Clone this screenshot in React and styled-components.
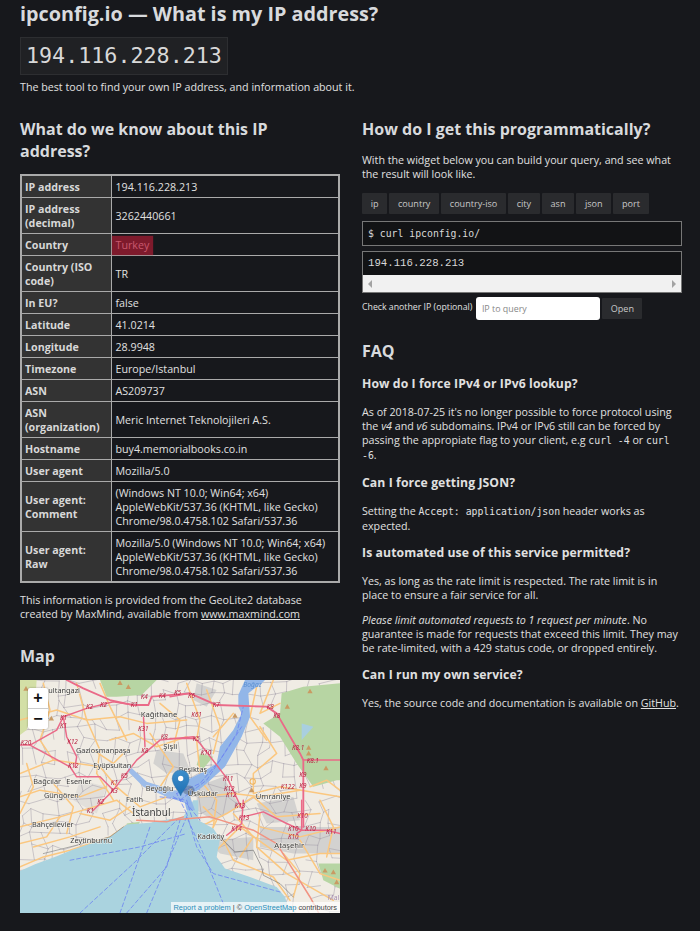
import React from 'react'
import styled, { createGlobalStyle } from 'styled-components'

const GlobalStyle = createGlobalStyle`
  html, body { margin: 0; padding: 0; background: #17181c; }
  body { color: #e0e0e0; font-family: "Open Sans", "Noto Sans", sans-serif; font-size: 10.7px; line-height: 14px; }
`

const rows = [
  ['IP address', '194.116.228.213'],
  ['IP address (decimal)', '3262440661'],
  ['Country', 'Turkey'],
  ['Country (ISO code)', 'TR'],
  ['In EU?', 'false'],
  ['Latitude', '41.0214'],
  ['Longitude', '28.9948'],
  ['Timezone', 'Europe/Istanbul'],
  ['ASN', 'AS209737'],
  ['ASN (organization)', 'Meric Internet Teknolojileri A.S.'],
  ['Hostname', 'buy4.memorialbooks.co.in'],
  ['User agent', 'Mozilla/5.0'],
  ['User agent: Comment', '(Windows NT 10.0; Win64; x64) AppleWebKit/537.36 (KHTML, like Gecko) Chrome/98.0.4758.102 Safari/537.36'],
  ['User agent: Raw', 'Mozilla/5.0 (Windows NT 10.0; Win64; x64) AppleWebKit/537.36 (KHTML, like Gecko) Chrome/98.0.4758.102 Safari/537.36'],
]

const fields = ['ip', 'country', 'country-iso', 'city', 'asn', 'json', 'port']

// map is drawn in a 960x698 space, offset so numbers read like the screenshot x3
const motorways = [
  'M200 120 L250 145 L330 180 L400 195 L445 195 L455 170 L570 160 L650 195 L800 200 L830 220 L900 340 L910 360 L910 560',
  'M60 315 L90 315 L170 270 L190 230 L260 205 L340 185 L400 195',
  'M90 315 L210 380 L230 410 L300 410 L340 450 L410 360 L480 300 L580 290 L600 310 L685 420 L725 505',
  'M190 230 L200 290 L230 350 L225 380',
  'M430 220 L435 320',
  'M340 450 L300 490 L280 510',
  'M910 360 L1020 360',
  'M510 170 L570 160',
  'M510 295 L580 295',
  'M730 530 L790 515 L860 550 L905 570 L980 570 L1020 580',
  'M905 480 L905 570 L890 580',
  'M730 480 L725 550 L680 585',
]
const trunks = [
  'M510 540 L630 530 L760 570 L830 610 L930 770 L960 825',
  'M410 540 L500 545 L550 530',
]
const primaries = [
  'M60 400 L160 360 L300 380 L350 440 L420 500 L500 470',
  'M60 560 L180 530 L350 480 L400 520',
  'M100 620 L210 590 L300 560',
  'M60 680 L130 650 L210 630 L330 590 L380 555',
  'M230 130 L260 240 L300 330 L290 400 L340 480',
  'M560 130 L600 240 L590 300 L600 400',
  'M780 260 L830 340 L760 400 L760 460 L840 440 L1020 470',
  'M600 470 L700 460 L780 470 L900 450',
  'M600 560 L680 520 L760 470 L830 530 L960 520',
  'M640 640 L720 560 L860 660 L960 640 L1020 640',
  'M670 600 L700 660 L820 710 L870 780',
  'M820 120 L780 220 L840 190',
  'M900 600 L960 700 L1020 720',
  'M450 280 L520 380 L480 440',
  'M60 470 L120 450 L240 470 L320 440',
  'M930 440 L980 420 L1020 450',
  'M60 240 L170 210 L260 240 L360 230 L440 250 L560 240',
  'M130 130 L150 210 L120 300 L160 360',
  'M330 300 L400 280 L470 320 L560 290',
  'M620 150 L660 260 L640 340',
  'M60 610 L140 590 L180 530',
  'M240 520 L330 540 L390 500',
  'M780 520 L770 620 L860 700 L1000 780',
  'M620 600 L650 540 L610 500',
  'M960 480 L1000 560 L980 650',
  'M770 140 L750 230 L800 300',
  'M600 420 L650 480 L640 560',
  'M280 330 L340 370 L380 330',
  'M780 560 L900 590 L1020 560',
  'M60 520 L100 440 L80 370',
  'M160 430 L220 500 L200 580',
  'M300 130 L330 200 L380 300',
  'M480 190 L540 240 L520 320',
  'M700 520 L760 590 L720 650',
  'M850 640 L900 700 L880 770',
  'M640 290 L700 220',
]
const ferries = [
  'M210 660 L420 620 L560 580', 'M240 818 L400 670 L530 540', 'M360 818 L450 560', 'M380 818 L500 680 L540 540',
  'M440 818 L560 530', 'M670 790 L610 640 L560 530', 'M840 755 L640 700 L590 620 L560 520', 'M560 520 L530 460',
  'M530 460 L600 430 L660 360 L710 280 L730 200', 'M540 480 L620 420 L680 330 L725 260',
  'M520 470 L560 490 L600 540', 'M480 470 L560 480 L575 530',
]
const places = [
  ['ultangazi', 145, 160, 22], ['Kağıthane', 422, 231, 23], ['Şişli', 490, 328, 23], ['Gaziosmanpaşa', 228, 340, 22],
  ['Eyüpsultan', 280, 384, 22], ['Beşiktaş', 536, 396, 22], ['Bağcılar', 100, 432, 22], ['Esenler', 199, 432, 22],
  ['Güngören', 132, 473, 22], ['Beyoğlu', 437, 454, 22], ['Üsküdar', 563, 467, 23], ['Ümraniye', 767, 478, 23],
  ['Fatih', 378, 486, 22], ['İstanbul', 396, 528, 30], ['Bahçelievler', 96, 561, 22], ['Kadıköy', 592, 595, 22],
  ['Zeytinburnu', 211, 608, 22], ['Ataşehir', 823, 622, 23],
]
const shields = [
  ['K4', 422, 178], ['K4', 476, 174], ['K5', 522, 166], ['K6', 564, 174], ['K7', 638, 202], ['K8', 800, 206], ['K8', 820, 234],
  ['K1', 392, 202], ['K2', 258, 208], ['K2', 300, 200], ['K1', 180, 240], ['K1', 180, 264], ['K61', 574, 232], ['K31', 414, 274],
  ['K8', 482, 298], ['K5', 578, 304], ['K12', 202, 312], ['K20', 62, 314], ['K8', 424, 340], ['K10', 602, 344], ['K12', 204, 384],
  ['K5', 362, 414], ['K1', 332, 436], ['K3', 332, 458], ['K2', 292, 492], ['K1', 260, 518], ['K11', 668, 424], ['K12', 672, 452],
  ['K12', 678, 472], ['K13', 704, 504], ['K13', 716, 538], ['K14', 694, 572], ['K122', 842, 448], ['K8.1', 876, 330], ['K8.1', 920, 368],
  ['K9', 898, 412], ['K9', 898, 444], ['K10', 892, 534], ['K10', 864, 572], ['K10', 864, 596], ['K10', 916, 572], ['K11', 978, 580],
]
const peaks = [
  [78, 145], [360, 128], [385, 140], [154, 234], [930, 153], [862, 199], [705, 226], [926, 322], [926, 339], [978, 383], [755, 449], [975, 690], [1000, 695], [1010, 725],
]

// thin street mesh, same every render
const noise = (n) => {
  const v = Math.sin(n * 127.1) * 43758.5453
  return v - Math.floor(v)
}
const CELL = 36
const point = (c, r) => [
  60 + c * CELL + (noise(c * 31 + r * 7) - 0.5) * 26,
  120 + r * CELL + (noise(c * 13 + r * 41) - 0.5) * 26,
]
const streets = []
for (let c = 0; c < 28; c++) {
  for (let r = 0; r < 20; r++) {
    const [x, y] = point(c, r)
    if (noise(c * 3 + r * 17) > 0.3) {
      const [x2, y2] = point(c + 1, r)
      streets.push(`M${x} ${y} L${x2} ${y2}`)
    }
    if (noise(c * 19 + r * 5) > 0.3) {
      const [x2, y2] = point(c, r + 1)
      streets.push(`M${x} ${y} L${x2} ${y2}`)
    }
  }
}

const MapDrawing = () => (
  <MapSvg viewBox="60 120 960 698" preserveAspectRatio="none">
    <defs>
      <linearGradient id="pin" x1="0" y1="0" x2="0" y2="1">
        <stop offset="0" stopColor="#3d8ecb" />
        <stop offset="1" stopColor="#1f6fb3" />
      </linearGradient>
    </defs>
    <rect x="60" y="120" width="960" height="698" fill="#f0ece4" />
    <g fill="#d3d2d0">
      <path d="M470 330 L550 340 L570 390 L500 400 L460 370 Z" />
      <path d="M590 130 L650 150 L620 200 L580 180 Z" />
      <path d="M590 440 L670 410 L720 500 L640 540 L590 510 Z" />
      <path d="M770 490 L880 470 L900 540 L800 550 Z" />
      <path d="M780 560 L1020 560 V640 L880 640 L780 620 Z" />
      <path d="M620 600 L760 590 L760 660 L660 640 Z" />
      <path d="M240 420 L320 440 L290 520 L220 480 Z" opacity="0.5" />
    </g>
    <g fill="none" strokeLinecap="round" strokeLinejoin="round">
      {streets.map((d, i) => <path key={i} d={d} stroke="#a39ca8" strokeWidth="2.2" opacity="0.7" />)}
    </g>
    <g fill="#b7d5a3">
      <path d="M60 120 H110 L105 190 L80 270 L60 285 Z" fill="#d3dfa6" />
      <path d="M300 120 H470 L425 165 L350 170 L320 170 Z" />
      <path d="M845 160 L910 140 L1020 130 V420 L1010 420 L940 440 L890 370 L840 290 L790 250 L840 220 Z" />
      <path d="M600 340 L640 350 L610 385 L590 375 Z" />
      <path d="M955 670 H1020 V745 L970 720 Z" />
      <path d="M380 550 L420 545 L410 565 L385 565 Z" />
    </g>
    <path d="M905 250 L940 260 L905 300 Z" fill="#a9cfe0" />
    <g fill="none" strokeLinecap="round" strokeLinejoin="round">
      {primaries.map((d, i) => <path key={i} d={d} stroke="#fbc77f" strokeWidth="4.5" />)}
    </g>
    <path
      d="M60 692 L105 672 L170 648 L220 628 L330 590 L380 553 L450 548 L550 530 L580 480 L595 480 L595 540 L640 565 L660 595 L650 650 L675 685 L750 710 L830 740 L855 770 L870 818 H60 Z"
      fill="#aad3df"
    />
    <path
      d="M735 120 L715 165 L715 200 L725 220 L700 270 L660 320 L650 370 L600 400 L540 430 L560 510 L585 510 L570 470 L620 430 L675 380 L725 290 L750 230 L745 160 L790 125 L795 120 Z"
      fill="#92b6e8"
    />
    <path d="M385 375 L440 425 L520 450 L560 455 L560 490 L500 470 L430 440 L385 395 Z" fill="#9dbce9" />
    <g fill="none" strokeLinecap="round" strokeLinejoin="round">
      {ferries.map((d, i) => <path key={i} d={d} stroke="#6f86f0" strokeWidth="2.5" strokeDasharray="12 8" />)}
      {trunks.map((d, i) => <path key={i} d={d} stroke="#f19382" strokeWidth="4.5" />)}
      {motorways.map((d, i) => <path key={i} d={d} stroke="#ea6a88" strokeWidth={i === 0 ? 5.5 : 4.5} />)}
      <path d="M670 600 L705 635 L760 630 L785 680 L790 705 L840 730 L880 770" stroke="#777" strokeWidth="2" />
      <path d="M130 640 L210 620 L330 590 L370 560" stroke="#888" strokeWidth="2" />
      <circle cx="758" cy="424" r="8" stroke="#f0b35a" strokeWidth="3" />
    </g>
    {peaks.map(([x, y], i) => <path key={i} d={`M${x - 8} ${y + 7} L${x} ${y - 7} L${x + 8} ${y + 7} Z`} fill="#c99a63" />)}
    <g fontFamily="'Noto Sans', sans-serif" fill="#3c3c3c" stroke="#f4f2ec" strokeWidth="3" paintOrder="stroke">
      {places.map(([t, x, y, s]) => <text key={t} x={x} y={y} fontSize={s}>{t}</text>)}
    </g>
    <g fontFamily="'Noto Sans', sans-serif" fontStyle="italic" fill="#b5203f" fontSize="19">
      {shields.map(([t, x, y], i) => <text key={i} x={x} y={y}>{t}</text>)}
    </g>
    <text x="730" y="140" fontFamily="'Noto Sans', sans-serif" fontStyle="italic" fontSize="20" fill="#5a8fd0">Boğaz</text>
    <text x="983" y="778" fontFamily="'Noto Sans', sans-serif" fontSize="20" fill="#a58cb0">Mal</text>
    <ellipse cx="566" cy="450" rx="18" ry="14" fill="#000" opacity="0.22" />
    <path d="M542 467 C536 450 517 436 517 415 C517 400 528 390 542 390 C556 390 567 400 567 415 C567 436 548 450 542 467 Z" fill="url(#pin)" stroke="#2a6ea6" strokeWidth="1.5" />
    <circle cx="542" cy="415" r="8" fill="#fff" />
  </MapSvg>
)

const App = () => (
  <>
    <GlobalStyle />
    <Page>
      <Title>ipconfig.io — What is my IP address?</Title>
      <IpBox>194.116.228.213</IpBox>
      <Lead>The best tool to find your own IP address, and information about it.</Lead>
      <Columns>
        <section>
          <Heading>What do we know about this IP address?</Heading>
          <InfoTable>
            <tbody>
              {rows.map(([key, value]) => (
                <tr key={key}>
                  <th>{key}</th>
                  <td>{key === 'Country' ? <Flagged>{value}</Flagged> : value}</td>
                </tr>
              ))}
            </tbody>
          </InfoTable>
          <Note>
            This information is provided from the GeoLite2 database created by MaxMind, available from{' '}
            <a href="#maxmind">www.maxmind.com</a>
          </Note>
          <MapHeading>Map</MapHeading>
          <MapFrame>
            <MapDrawing />
            <ZoomControl>
              <ZoomButton>+</ZoomButton>
              <ZoomButton>−</ZoomButton>
            </ZoomControl>
            <Attribution>
              <a href="#report">Report a problem</a> | © <a href="#osm">OpenStreetMap</a> contributors
            </Attribution>
          </MapFrame>
        </section>
        <section>
          <Heading>How do I get this programmatically?</Heading>
          <WidgetIntro>With the widget below you can build your query, and see what the result will look like.</WidgetIntro>
          <FieldRow>
            {fields.map((f) => <FieldButton key={f}>{f}</FieldButton>)}
          </FieldRow>
          <CurlBox>$ curl ipconfig.io/</CurlBox>
          <ResultBox>
            <ResultText>194.116.228.213</ResultText>
            <ScrollTrack>
              <Arrow $dir="left" />
              <Arrow $dir="right" />
            </ScrollTrack>
          </ResultBox>
          <QueryRow>
            <QueryLabel>Check another IP (optional)</QueryLabel>
            <QueryInput placeholder="IP to query" />
            <OpenButton>Open</OpenButton>
          </QueryRow>
          <FaqHeading>FAQ</FaqHeading>
          <Question>How do I force IPv4 or IPv6 lookup?</Question>
          <Answer>
            As of 2018-07-25 it's no longer possible to force protocol using the <em>v4</em> and <em>v6</em> subdomains.
            IPv4 or IPv6 still can be forced by passing the appropiate flag to your client, e.g <code>curl&nbsp;-4</code> or <code>curl -6</code>.
          </Answer>
          <Question>Can I force getting JSON?</Question>
          <Answer>Setting the <code>Accept: application/json</code> header works as expected.</Answer>
          <Question>Is automated use of this service permitted?</Question>
          <Answer>Yes, as long as the rate limit is respected. The rate limit is in place to ensure a fair service for all.</Answer>
          <Answer><em>Please limit automated requests to 1 request per minute</em>. No guarantee is made for requests that exceed this limit. They may be rate-limited, with a 429 status code, or dropped entirely.</Answer>
          <Question>Can I run my own service?</Question>
          <Answer>Yes, the source code and documentation is available on <a href="#github">GitHub</a>.</Answer>
        </section>
      </Columns>
    </Page>
  </>
)

export default App

const Page = styled.div`
  width: 662px;
  height: 931px;
  padding: 0 18px 0 20px;
  overflow: hidden;
  a { color: inherit; }
`

const Title = styled.h1`
  margin: 0;
  font-size: 19.8px;
  line-height: 27px;
  font-weight: 700;
  color: #d8dadd;
  white-space: nowrap;
`

const IpBox = styled.div`
  display: inline-block;
  margin-top: 10px;
  padding: 0 5px;
  height: 36px;
  line-height: 36px;
  font-family: "DejaVu Sans Mono", monospace;
  font-size: 21.7px;
  color: #d8d8d8;
  background: #202124;
  border: 1px solid #2d2e31;
`

const Lead = styled.p`
  margin: 5px 0 0;
`

const Columns = styled.div`
  display: grid;
  grid-template-columns: 320px 320px;
  column-gap: 22px;
  margin-top: 24px;
`

const Heading = styled.h2`
  margin: 0;
  font-size: 16px;
  line-height: 22px;
  font-weight: 700;
  color: #d8dadd;
`

const InfoTable = styled.table`
  width: 320px;
  margin-top: 12px;
  border-collapse: collapse;
  border: 2px solid #aaa;
  table-layout: fixed;

  th, td {
    border: 1px solid #aaa;
    padding: 3.5px 4px;
    line-height: 14px;
    font-size: 10.7px;
    text-align: left;
    font-weight: 400;
  }

  th {
    width: 81.5px;
    padding-left: 3px;
    font-weight: 700;
    background: #333;
    color: #d8d8d8;
  }

  td { background: #17181c; color: #e0e0e0; }
`

const Flagged = styled.span`
  display: inline-block;
  margin: -4px -4px;
  padding: 2px 4px;
  height: 15px;
  background: #7e1a2c;
  color: #c9586e;
  box-shadow: 0 0 1px #7e1a2c;
`

const Note = styled.p`
  margin: 10px 0 0;
`

const MapHeading = styled(Heading)`
  margin-top: 24px;
`

const MapFrame = styled.div`
  position: relative;
  width: 320px;
  height: 233px;
  margin-top: 13px;
  overflow: hidden;
`

const MapSvg = styled.svg`
  display: block;
  width: 100%;
  height: 100%;
  filter: blur(0.4px);
`

const ZoomControl = styled.div`
  position: absolute;
  top: 8px;
  left: 8px;
  width: 20px;
  border-radius: 2px;
  overflow: hidden;
  background: #fff;
  box-shadow: 0 0 2px rgba(0, 0, 0, 0.4);
`

const ZoomButton = styled.div`
  height: 20px;
  line-height: 20px;
  text-align: center;
  font-family: "Liberation Sans", sans-serif;
  font-size: 16px;
  font-weight: 700;
  color: #111;
  & + & { border-top: 1px solid #ccc; }
`

const Attribution = styled.div`
  position: absolute;
  right: 0;
  bottom: 0;
  height: 11px;
  padding: 0 3px;
  line-height: 11px;
  font-family: "Liberation Sans", sans-serif;
  font-size: 7.4px;
  white-space: nowrap;
  color: #444;
  background: rgba(255, 255, 255, 0.7);
  a { color: #2a8db8; text-decoration: none; }
`

const WidgetIntro = styled.p`
  margin: 13px 0 0;
`

const FieldRow = styled.div`
  display: flex;
  gap: 2px;
  margin-top: 12px;
`

const FieldButton = styled.button`
  height: 21px;
  padding: 0 8.7px;
  border: none;
  border-radius: 1px;
  background: #2a2b2e;
  color: #c8c8c8;
  font-family: inherit;
  font-size: 9.1px;
`

const CurlBox = styled.div`
  box-sizing: border-box;
  height: 25px;
  margin-top: 7px;
  padding: 0 5px;
  line-height: 23px;
  font-family: "DejaVu Sans Mono", monospace;
  font-size: 9.8px;
  color: #d8d8d8;
  background: #121315;
  border: 1px solid #777;
`

const ResultBox = styled.div`
  box-sizing: border-box;
  height: 42px;
  margin-top: 5px;
  background: #121315;
  border: 1px solid #777;
`

const ResultText = styled.div`
  height: 23px;
  padding: 0 5px;
  line-height: 23px;
  font-family: "Liberation Mono", monospace;
  font-size: 10.7px;
  color: #d8d8d8;
`

const ScrollTrack = styled.div`
  display: flex;
  justify-content: space-between;
  align-items: center;
  height: 17px;
  padding: 0 5px;
  background: #f1f1f1;
`

const Arrow = styled.span`
  width: 0;
  height: 0;
  border-top: 4px solid transparent;
  border-bottom: 4px solid transparent;
  ${(p) => (p.$dir === 'left' ? 'border-right: 4px solid #a3a3a3;' : 'border-left: 4px solid #a3a3a3;')}
`

const QueryRow = styled.div`
  display: flex;
  align-items: center;
  gap: 2px;
  margin-top: 4px;
`

const QueryLabel = styled.span`
  font-size: 8.76px;
  margin: -3px 2px 0 0;
`

const QueryInput = styled.input`
  box-sizing: border-box;
  width: 124px;
  height: 23px;
  padding: 0 5.5px;
  border: none;
  border-radius: 3px;
  background: #fff;
  font-family: inherit;
  font-size: 8.9px;
  &::placeholder { color: #888; opacity: 1; }
`

const OpenButton = styled.button`
  height: 21px;
  width: 40px;
  padding: 0;
  border: none;
  border-radius: 1px;
  background: #2a2b2e;
  color: #c8c8c8;
  font-family: inherit;
  font-size: 9.1px;
`

const FaqHeading = styled(Heading)`
  margin-top: 20px;
  padding-bottom: 2px;
`

const Question = styled.h3`
  margin: 12px 0 0;
  font-size: 12.2px;
  letter-spacing: 0.1px;
  line-height: 16px;
  font-weight: 700;
  color: #e0e0e0;
  & + p { margin-top: 13px; }
`

const Answer = styled.p`
  margin: 11px 0 0;
  code { font-family: "DejaVu Sans Mono", monospace; font-size: 9.8px; }
`
